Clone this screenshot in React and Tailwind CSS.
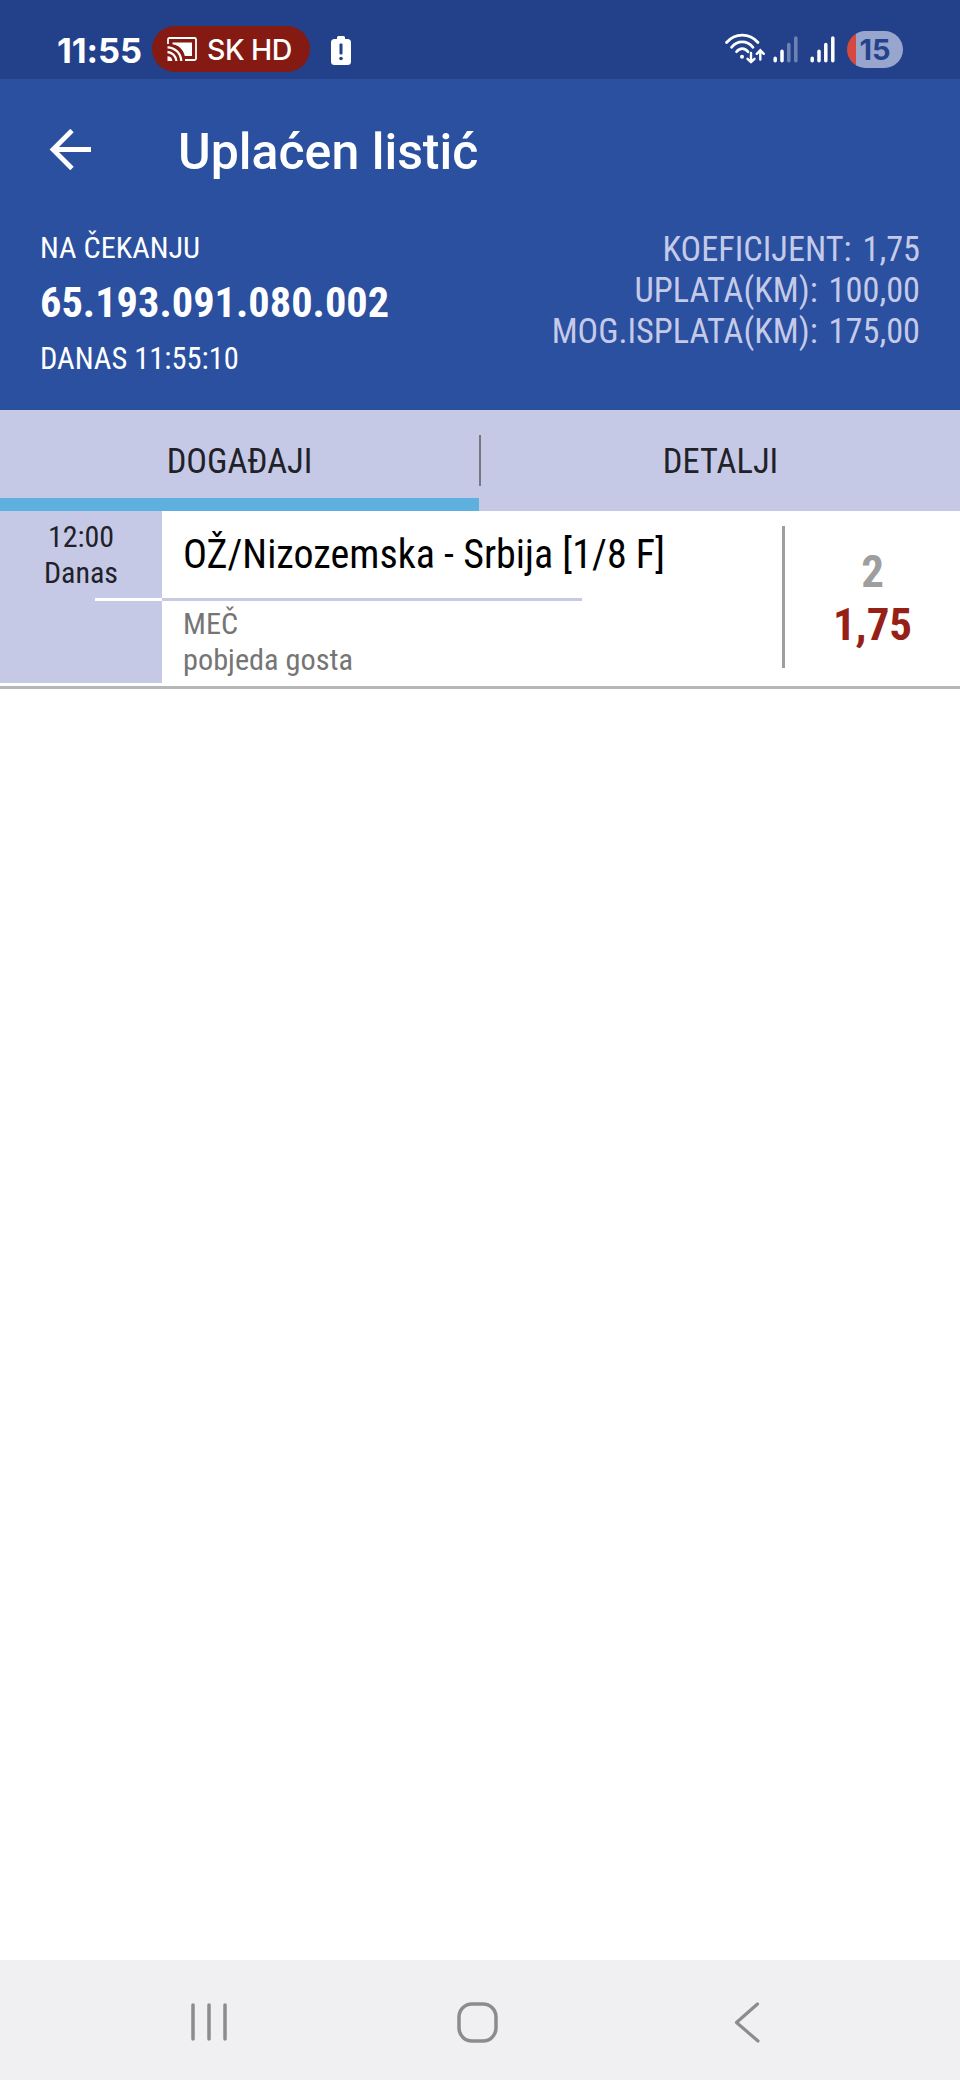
const slip = {
  status: 'NA ČEKANJU',
  number: '65.193.091.080.002',
  time: 'DANAS 11:55:10',
  totals: [
    { label: 'KOEFICIJENT:', value: '1,75' },
    { label: 'UPLATA(KM):', value: '100,00' },
    { label: 'MOG.ISPLATA(KM):', value: '175,00' },
  ],
};

const events = [
  {
    time: '12:00',
    day: 'Danas',
    match: 'OŽ/Nizozemska - Srbija [1/8 F]',
    market: 'MEČ',
    pick: 'pobjeda gosta',
    sign: '2',
    odd: '1,75',
  },
];

const CastIcon = () => (
  <svg className="h-6 w-[30px]" viewBox="0 0 30 24" fill="none" stroke="#fff" strokeWidth="1.8">
    <path d="M1 7V2.5Q1 1 2.500 1H27.500Q29 1 29 2.500V21.500Q29 23 27.500 23H18" />
    <path d="M5.500 5.500H25V19H17.800C16.500 12.500 11.500 8 5.500 7.200Z" fill="#fff" stroke="none" />
    <path d="M0.500 10.300C8 10.600 13.800 16 14.300 24M0.500 15C5.200 15.300 9 19 9.400 24" strokeWidth="2.300" />
    <path d="M0.500 24V19.200A4.800 4.800 0 0 1 5.300 24Z" fill="#fff" stroke="none" />
  </svg>
);

const BatteryAlertIcon = () => (
  <svg className="h-[29px] w-5" viewBox="0 0 20 29">
    <path
      d="M6 3V1.500Q6 0 7.500 0H12.500Q14 0 14 1.500V3H16.500Q20 3 20 6.500V25.500Q20 29 16.500 29H3.500Q0 29 0 25.500V6.500Q0 3 3.500 3Z"
      fill="#fff"
    />
    <rect x="8.500" y="7.500" width="3" height="11" rx="1" fill="#22418a" />
    <circle cx="10" cy="22.500" r="1.800" fill="#22418a" />
  </svg>
);

const WifiIcon = () => (
  <svg className="h-[31px] w-10" viewBox="0 0 40 31" fill="none" stroke="#fff" strokeWidth="2.700" strokeLinecap="round">
    <path d="M1.500 9.500C10 -0.400 24.500 -0.400 33 9.500" />
    <path d="M6.500 14.300C12.500 7 22 7 28 14.300" />
    <path d="M11.500 18.800C14.800 14.500 19.800 14.500 23 18.800" />
    <circle cx="17" cy="23.800" r="2" fill="#fff" stroke="none" />
    <path d="M26 20V29M22.500 25.800L26 29.200L29.500 25.800" strokeWidth="2.400" />
    <path d="M35.300 26.500V17.500M31.800 20.800L35.300 17.300L38.800 20.800" strokeWidth="2.400" />
  </svg>
);

const SignalIcon = ({ dim }) => (
  <svg className="h-[27px] w-[26px]" viewBox="0 0 26 27" stroke="#fff" strokeWidth="3.500" strokeLinecap="round">
    <path d="M2.200 22.200V24.800M9 15.300V24.800" />
    <path d="M15.800 8.500V24.800M22.800 2V24.800" opacity={dim ? 0.35 : 1} />
  </svg>
);

const StatusBar = () => (
  <div className="flex h-[79px] bg-[#22418a] pt-[26px] pl-[57px] font-['Inter',sans-serif] text-white">
    <span className="mt-[4px] w-[95px] text-[34.5px] leading-[41px] font-bold tracking-[-0.1px]">11:55</span>
    <div className="flex h-[46px] w-[158px] items-center rounded-full bg-[#841a12] pl-[15px]">
      <CastIcon />
      <span className="ml-[10px] pt-px text-[28.5px] leading-[46px] font-medium whitespace-nowrap tracking-[-0.5px]">SK HD</span>
    </div>
    <div className="mt-[10px] ml-[21px]">
      <BatteryAlertIcon />
    </div>
    <div className="mt-[7px] ml-auto">
      <WifiIcon />
    </div>
    <div className="mt-[10px] ml-2">
      <SignalIcon dim />
    </div>
    <div className="mt-[10px] ml-[11px]">
      <SignalIcon />
    </div>
    <div className="mt-[5px] mr-[57px] ml-[11px] h-[37px] w-[56px] rounded-full bg-linear-to-r from-[#d5493e] from-[9px] to-[#98a5cd] to-[9px] text-center text-[29px] leading-[38px] font-bold text-[#24438c]">
      15
    </div>
  </div>
);

const Header = () => (
  <header className="h-[331px] bg-[#2a509f] text-white">
    <div className="flex h-[150px] pt-[43px] pl-[49px]">
      <svg className="mt-[7px] h-[42px] w-[42px]" viewBox="0 0 42 42" fill="none" stroke="#fff" strokeWidth="4.800">
        <path d="M42 20.500H4M23 1.500L4 20.500L23 39.500" />
      </svg>
      <h1 className="ml-[87px] font-['Roboto',sans-serif] text-[50px] leading-[60px] font-medium font-stretch-normal">
        Uplaćen listić
      </h1>
    </div>
    <div className="flex justify-between px-10">
      <div>
        <p className="pt-px text-[30.3px] leading-9">{slip.status}</p>
        <p className="mt-[9px] text-[42.4px] leading-[56px] font-bold">{slip.number}</p>
        <p className="mt-[10px] text-[30.5px] leading-9">{slip.time}</p>
      </div>
      <div className="text-right text-[34.3px] leading-[41px] text-[#c5cae9]">
        {slip.totals.map((row) => (
          <p key={row.label} className="[word-spacing:3px]">
            {row.label} {row.value}
          </p>
        ))}
      </div>
    </div>
  </header>
);

const Tabs = () => (
  <nav className="flex h-[101px] bg-[#c6c9e6] text-center text-[34.5px] leading-[103px] text-[#212129]">
    <div className="flex w-[479px] flex-col">
      <span className="h-[88px]">DOGAĐAJI</span>
      <span className="h-[13px] bg-[#5eb0df]" />
    </div>
    <span className="mt-[25px] h-[51px] w-[2px] bg-[#77777f]" />
    <span className="flex-1">DETALJI</span>
  </nav>
);

const EventRow = ({ event }) => (
  <div className="flex h-[178px] border-b-[3px] border-[#b4b6b7]">
    <div className="flex h-[172px] w-[162px] flex-col bg-[#c6c9e6] pt-2 text-center text-[30px] leading-9 text-[#212129]">
      <span>{event.time}</span>
      <span>{event.day}</span>
      <span className="mt-[7px] h-[3px] w-[67px] self-end bg-white" />
    </div>
    <div className="w-[620px]">
      <p className="h-[87px] pt-[19px] pl-[21px] text-[40px] leading-[50px] text-black">{event.match}</p>
      <div className="h-[3px] w-[420px] bg-[#c8cae4]" />
      <div className="pt-[5px] pl-[21px] text-[30.3px] leading-9 text-[#757575]">
        <p>{event.market}</p>
        <p>{event.pick}</p>
      </div>
    </div>
    <span className="mt-[15px] h-[142px] w-[3px] bg-[#9e9e9e]" />
    <div className="flex-1 pt-[34px] text-center text-[45px] leading-[53px] font-bold">
      <p className="text-[#9e9e9e]">{event.sign}</p>
      <p className="text-[#961f17]">{event.odd}</p>
    </div>
  </div>
);

const NavigationBar = () => (
  <footer className="flex h-[120px] items-center bg-[#f0f0f2] pt-1 pl-[191px]">
    <svg className="h-10 w-9" viewBox="0 0 36 40" stroke="#8c8c8c" strokeWidth="3.500" strokeLinecap="round">
      <path d="M2 3V37M18 3V37M34 3V37" />
    </svg>
    <svg className="ml-[230px] h-[41px] w-[41px]" viewBox="0 0 41 41" fill="none" stroke="#8c8c8c" strokeWidth="3.500">
      <rect x="2" y="2" width="37" height="37" rx="13" />
    </svg>
    <svg className="ml-[236px] h-[41px] w-[26px]" viewBox="0 0 26 41" fill="none" stroke="#8c8c8c" strokeWidth="3.200" strokeLinecap="round" strokeLinejoin="round">
      <path d="M23.500 2L2.500 20.500L24 39" />
    </svg>
  </footer>
);

export default function App() {
  return (
    <div className="flex h-[2080px] w-[960px] flex-col overflow-hidden bg-white font-['Roboto_Condensed','Roboto',sans-serif] font-stretch-75%">
      <StatusBar />
      <Header />
      <Tabs />
      <main className="flex-1">
        {events.map((event) => (
          <EventRow key={event.match} event={event} />
        ))}
      </main>
      <NavigationBar />
    </div>
  );
}
